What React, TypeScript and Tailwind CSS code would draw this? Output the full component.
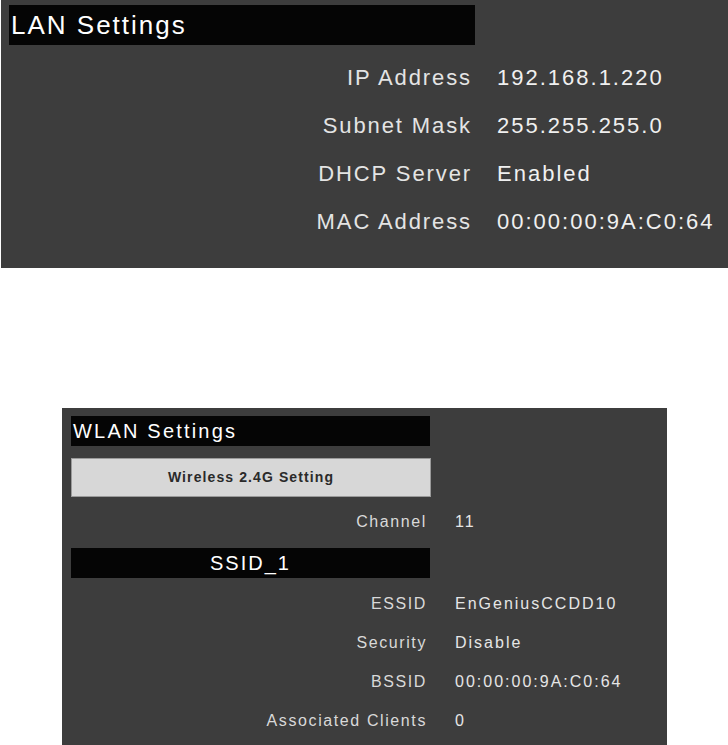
const lan = [
  ['IP Address', '192.168.1.220'],
  ['Subnet Mask', '255.255.255.0'],
  ['DHCP Server', 'Enabled'],
  ['MAC Address', '00:00:00:9A:C0:64'],
];

const ssid = [
  ['ESSID', 'EnGeniusCCDD10'],
  ['Security', 'Disable'],
  ['BSSID', '00:00:00:9A:C0:64'],
  ['Associated Clients', '0'],
];

function WlanRow({ label, value }: { label: string; value: string }) {
  return (
    <div className="flex h-[39px] items-center">
      <span className="w-[356px] text-right text-[16px] tracking-[1.6px] text-[#d9d9d9]">{label}</span>
      <span className="ml-[28px] text-[16px] tracking-[2px] text-[#e6e6e6]">{value}</span>
    </div>
  );
}

export default function App() {
  return (
    <div className="min-h-[745px] w-[728px] overflow-hidden bg-white font-['Liberation_Sans',Arial,sans-serif]">
      <section className="ml-px bg-[#3d3d3d] px-[8px] pt-[5px] pb-[23px]">
        <div className="flex h-[40px] w-[466px] items-center bg-[#050505] pl-[2px]">
          <h1 className="text-[26px] leading-none tracking-[2px] text-white">LAN Settings</h1>
        </div>
        <div className="mt-[8px]">
          {lan.map(([label, value]) => (
            <div key={label} className="flex h-[48px] items-center">
              <span className="w-[463px] text-right text-[22px] tracking-[1.9px] text-[#e4e4e4]">{label}</span>
              <span className="ml-[25px] text-[22px] tracking-[2px] text-[#f0f0f0]">{value}</span>
            </div>
          ))}
        </div>
      </section>

      <section className="mt-[140px] ml-[62px] h-[337px] w-[605px] bg-[#3d3d3d] pt-[8px] pl-[9px]">
        <div className="flex h-[30px] w-[359px] items-center bg-[#050505] pl-[2px]">
          <h2 className="text-[20px] leading-none tracking-[2.2px] text-white">WLAN Settings</h2>
        </div>
        <div className="mt-[12px] flex h-[39px] w-[360px] items-center justify-center border border-[#9a9a9a] bg-[#d7d7d7]">
          <span className="text-[14px] font-bold tracking-[1.1px] text-[#2a2a2a]">Wireless 2.4G Setting</span>
        </div>
        <div className="mt-[5px]">
          <WlanRow label="Channel" value="11" />
        </div>
        <div className="mt-[7px] flex h-[30px] w-[359px] items-center justify-center bg-[#050505]">
          <span className="text-[20px] leading-none tracking-[2px] text-white">SSID_1</span>
        </div>
        <div className="mt-[6px]">
          {ssid.map(([label, value]) => (
            <WlanRow key={label} label={label} value={value} />
          ))}
        </div>
      </section>
    </div>
  );
}
